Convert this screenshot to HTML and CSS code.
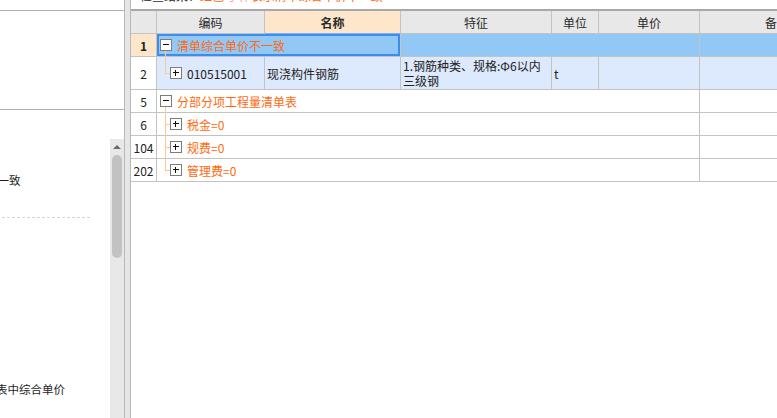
FILE: index.html
```html
<!DOCTYPE html>
<html lang="zh-CN">
<head>
<meta charset="utf-8">
<title>清单综合单价检查</title>
<link rel="stylesheet" href="styles.css">
</head>
<body>
<div class="app">
  <aside class="left">
    <div class="lp-top"></div>
    <div class="lp-mid"></div>
    <div class="lp-bottom">
      <div class="lp-content">
        <div class="lp-item"><span class="clip-a">单价不一致</span></div>
        <div class="dash"></div>
        <div class="lp-foot"><span class="clip-b">表中综合单价</span></div>
      </div>
      <div class="vscroll">
        <div class="arrow"></div>
        <div class="thumb"></div>
      </div>
    </div>
  </aside>
  <div class="splitter"></div>
  <main class="main">
    <div class="strip"><div class="strip-text"><span class="dark">检查结果：</span><span class="org">红色</span> <span class="pink">字体</span><span class="org">表示清单综合单价不一致</span></div></div>
    <div class="grid">
      <!-- header -->
      <div class="cell hd"></div>
      <div class="cell hd">编码</div>
      <div class="cell hd hd-act">名称</div>
      <div class="cell hd">特征</div>
      <div class="cell hd">单位</div>
      <div class="cell hd">单价</div>
      <div class="cell hd hd-last">备注</div>

      <!-- row 1 -->
      <div class="cell rn rn-sel">1</div>
      <div class="cell blue sel span2 parent">
        <span class="tog"><svg width="12" height="12" viewBox="0 0 12 12" shape-rendering="crispEdges"><rect x="0.5" y="0.5" width="11" height="11" fill="#fff" stroke="#7c7c7c"/><path d="M3 5.5H9" stroke="#111"/></svg></span>
        <span class="otxt">清单综合单价不一致</span>
      </div>
      <div class="cell blue span3"></div>
      <div class="cell blue"></div>

      <!-- row 2 -->
      <div class="cell rn">2</div>
      <div class="cell lblue child">
        <span class="tog"><svg width="12" height="12" viewBox="0 0 12 12" shape-rendering="crispEdges"><rect x="0.5" y="0.5" width="11" height="11" fill="#fff" stroke="#7c7c7c"/><path d="M3 5.5H9M5.5 3V9" stroke="#111"/></svg></span>
        <span class="dtxt">010515001</span>
      </div>
      <div class="cell lblue txt">现浇构件钢筋</div>
      <div class="cell lblue feat">1.钢筋种类、规格:Φ6以内<br>三级钢</div>
      <div class="cell lblue txt">t</div>
      <div class="cell lblue"></div>
      <div class="cell lblue"></div>

      <!-- row 5 -->
      <div class="cell rn">5</div>
      <div class="cell span5 parent">
        <span class="tog"><svg width="12" height="12" viewBox="0 0 12 12" shape-rendering="crispEdges"><rect x="0.5" y="0.5" width="11" height="11" fill="#fff" stroke="#7c7c7c"/><path d="M3 5.5H9" stroke="#111"/></svg></span>
        <span class="otxt">分部分项工程量清单表</span>
      </div>
      <div class="cell"></div>

      <!-- row 6 -->
      <div class="cell rn">6</div>
      <div class="cell span5 child">
        <span class="tog"><svg width="12" height="12" viewBox="0 0 12 12" shape-rendering="crispEdges"><rect x="0.5" y="0.5" width="11" height="11" fill="#fff" stroke="#7c7c7c"/><path d="M3 5.5H9M5.5 3V9" stroke="#111"/></svg></span>
        <span class="otxt">税金=0</span>
      </div>
      <div class="cell"></div>

      <!-- row 104 -->
      <div class="cell rn">104</div>
      <div class="cell span5 child">
        <span class="tog"><svg width="12" height="12" viewBox="0 0 12 12" shape-rendering="crispEdges"><rect x="0.5" y="0.5" width="11" height="11" fill="#fff" stroke="#7c7c7c"/><path d="M3 5.5H9M5.5 3V9" stroke="#111"/></svg></span>
        <span class="otxt">规费=0</span>
      </div>
      <div class="cell"></div>

      <!-- row 202 -->
      <div class="cell rn">202</div>
      <div class="cell span5 child">
        <span class="tog"><svg width="12" height="12" viewBox="0 0 12 12" shape-rendering="crispEdges"><rect x="0.5" y="0.5" width="11" height="11" fill="#fff" stroke="#7c7c7c"/><path d="M3 5.5H9M5.5 3V9" stroke="#111"/></svg></span>
        <span class="otxt">管理费=0</span>
      </div>
      <div class="cell"></div>
    </div>
  </main>
</div>
</body>
</html>
```
FILE: styles.css
```css
* { box-sizing: border-box; }
html, body { margin: 0; padding: 0; background: #fff; }
body {
  font-family: "Noto Sans CJK SC", "Noto Sans", sans-serif;
  font-size: 12px;
  color: #222;
}
.app {
  display: flex;
  width: 777px;
  height: 418px;
  overflow: hidden;
}

/* left panel */
.left {
  width: 124px;
  flex: none;
  display: flex;
  flex-direction: column;
  background: #fff;
}
.lp-top { height: 11px; border-bottom: 1px solid #b0b0b0; flex: none; }
.lp-mid { height: 99px; border-bottom: 1px solid #b0b0b0; flex: none; }
.lp-bottom { flex: 1; display: flex; min-height: 0; }
.lp-content {
  width: 110px;
  overflow: hidden;
  padding-top: 62px;
  font-size: 11.5px;
  color: #1e1e1e;
}
.lp-item, .lp-foot { line-height: 16px; white-space: nowrap; }
.clip-a { display: inline-block; margin-left: -37px; }
.dash { margin: 29px 20px 0 2px; border-top: 1px dashed #d6d6d6; height: 0; }
.lp-foot { margin-top: 163px; }
.clip-b { display: inline-block; margin-left: -4px; }
.vscroll {
  width: 14px;
  margin-top: 29px;
  background: #e8e8e8;
  display: flex;
  flex-direction: column;
  align-items: center;
}
.arrow {
  margin-top: 6px;
  width: 0; height: 0;
  border-left: 4px solid transparent;
  border-right: 4px solid transparent;
  border-bottom: 4px solid #6a6a6a;
}
.thumb {
  margin-top: 6px;
  width: 10px;
  height: 103px;
  border-radius: 5px;
  background: #c2c2c2;
}

.splitter {
  width: 7px;
  flex: none;
  background: #e6e6e6;
  border-left: 1px solid #b8b8b8;
  border-right: 1px solid #b8b8b8;
}

/* main */
.main { flex: 1; min-width: 0; overflow: hidden; }
.strip { height: 9px; overflow: hidden; padding-left: 9px; }
.strip-text { margin-top: -11px; line-height: 14px; white-space: nowrap; font-size: 12px; }
.strip-text .dark { color: #2a2a2a; }
.strip-text .org { color: #ff6a10; }
.strip-text .pink { color: #ff9aa8; }

.grid {
  display: grid;
  grid-template-columns: 26px 108px 136px 151px 47px 101px 154px;
  grid-template-rows: 23px 23px 33px 23px 23px 23px 23px;
  border-top: 2px solid #a8a8a8;
  width: max-content;
}
.cell {
  border-right: 1px solid #c3c3c3;
  border-bottom: 1px solid #c3c3c3;
  display: flex;
  align-items: center;
  white-space: nowrap;
  min-width: 0;
}
.hd {
  background: #e8e8e8;
  justify-content: center;
  color: #2a2a2a;
}
.hd-act {
  background: #fde6c9;
  font-weight: bold;
  border-bottom: 1px solid #7fb2ee;
}
.hd-last { border-right: none; }
.rn { justify-content: center; color: #222; background: #fff; }
.rn-sel { background: #fde6c9; font-weight: bold; }
.blue { background: #91c8f6; }
.lblue { background: #dde9fc; }
.sel { box-shadow: inset 0 0 0 2px #3b8df0; }
.span2 { grid-column: span 2; }
.span3 { grid-column: span 3; }
.span5 { grid-column: span 5; }

.parent { padding-left: 3px; gap: 5px; }
.child { padding-left: 13px; gap: 5px; position: relative; }
.child::before {
  content: "";
  position: absolute;
  left: 8px;
  top: -13px;
  width: 5px;
  height: calc(50% + 13px);
  border-left: 1px solid #ffc890;
  border-bottom: 1px solid #ffc890;
}
.tog {
  position: relative;
  z-index: 1;
  display: block;
  width: 12px;
  height: 12px;
  flex: none;
}
.tog svg { display: block; }
.otxt { color: #ff6a10; }
.dtxt { color: #222; }
.txt { padding-left: 2px; }
.feat {
  padding-left: 2px;
  line-height: 15px;
  white-space: normal;
  align-items: center;
  color: #222;
}
```
